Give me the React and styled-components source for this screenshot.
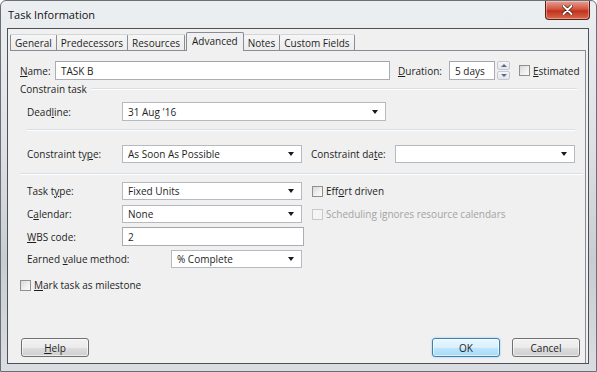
import React from 'react'
import styled, { createGlobalStyle } from 'styled-components'

const GlobalStyle = createGlobalStyle`
  html, body {
    margin: 0;
    padding: 0;
    background: #ffffff;
  }
  body {
    font-family: "Open Sans", "Noto Sans", sans-serif;
    font-size: 10px;
    color: #1e1e1e;
  }
`

const Window = styled.div`
  width: 597px;
  height: 372px;
  box-sizing: border-box;
  display: flex;
  flex-direction: column;
  border: 1px solid #6b6f74;
  border-radius: 6px 6px 0 0;
  background: linear-gradient(180deg, #eceff2 0%, #dde1e5 40%, #c8cdd3 70%, #dadee2 100%);
  overflow: hidden;
`

const TitleBar = styled.div`
  height: 27px;
  display: flex;
  align-items: center;
  justify-content: space-between;
  padding-left: 7px;
  padding-right: 6px;
`

const Title = styled.span`
  font-size: 11px;
  color: #111;
  margin-top: -1px;
`

const CloseButton = styled.div`
  width: 43px;
  height: 18px;
  margin-top: -8px;
  border: 1px solid #5a1e17;
  border-top: none;
  border-radius: 0 0 4px 4px;
  background: linear-gradient(180deg, #e6a196 0%, #d4553f 45%, #c0321b 55%, #d8684c 100%);
  display: flex;
  align-items: center;
  justify-content: center;
  box-shadow: inset 0 0 0 1px rgba(255, 255, 255, 0.35);
`

const Client = styled.div`
  flex: 1;
  margin: 0 7px 7px 6px;
  border: 1px solid #4d5156;
  background: #f0f0f0;
  display: flex;
  flex-direction: column;
`

const TabStrip = styled.div`
  display: flex;
  align-items: flex-end;
  height: 21px;
  padding-left: 2px;
  margin-top: 1px;
`

const Tab = styled.div`
  height: ${p => (p.active ? '19px' : '17px')};
  padding: 0 ${p => (p.active ? 5 : 4)}px ${p => (p.active ? '3px' : '0')};
  margin: ${p => (p.active ? '0 0 0 1px' : '0')};
  box-sizing: border-box;
  display: flex;
  align-items: center;
  border-top: 1px solid ${p => (p.active ? '#898c95' : '#d2d4d8')};
  border-right: 1px solid #898c95;
  border-left: ${p => (p.first || p.active ? '1px solid #898c95' : 'none')};
  border-bottom: ${p => (p.active ? 'none' : '1px solid #898c95')};
  background: ${p => (p.active ? '#f0f0f0' : 'linear-gradient(180deg, #f6f6f6 0%, #ececec 100%)')};
  border-radius: 2px 2px 0 0;
  position: relative;
  z-index: ${p => (p.active ? 2 : 1)};
`

const Panel = styled.div`
  flex: 1;
  margin: -1px 2px 0 2px;
  border-top: 1px solid #898c95;
  border-right: 1px solid #898c95;
  display: flex;
  flex-direction: column;
`

const Row = styled.div`
  display: flex;
  align-items: center;
  height: ${p => p.h || 19}px;
  margin-top: ${p => p.mt || 0}px;
  padding-left: ${p => p.pl || 0}px;
`

const Label = styled.span`
  width: ${p => p.w}px;
  margin-left: ${p => p.ml || 0}px;
  flex: none;
  white-space: nowrap;
`

const Key = styled.u`
  text-decoration-thickness: 1px;
  text-underline-offset: 1px;
`

const TextBox = styled.div`
  width: ${p => p.w}px;
  height: ${p => p.h || 19}px;
  box-sizing: border-box;
  border: 1px solid #abadb3;
  border-top-color: #a2a5ab;
  background: #fff;
  display: flex;
  align-items: center;
  padding-left: 5px;
  flex: none;
`

const Combo = styled(TextBox)`
  justify-content: space-between;
  padding-right: 7px;
  border-color: #b6b9bf;
`

const Arrow = styled.span`
  width: 0;
  height: 0;
  border-left: 3.5px solid transparent;
  border-right: 3.5px solid transparent;
  border-top: 4px solid #1a1a1a;
`

const Spinner = styled.div`
  width: 13px;
  height: 19px;
  margin-left: 2px;
  display: flex;
  flex-direction: column;
  gap: 1px;
  flex: none;
`

const SpinButton = styled.div`
  flex: 1;
  border: 1px solid #c5c8ce;
  border-radius: 2px;
  background: linear-gradient(180deg, #f4f6f8 0%, #e2e5ea 100%);
  display: flex;
  align-items: center;
  justify-content: center;
`

const SpinArrow = styled.span`
  width: 0;
  height: 0;
  border-left: 3px solid transparent;
  border-right: 3px solid transparent;
  ${p => (p.up ? 'border-bottom: 3px solid #5d6b86;' : 'border-top: 3px solid #5d6b86;')}
`

const Check = styled.span`
  width: 11px;
  height: 11px;
  box-sizing: border-box;
  border: 1px solid ${p => (p.disabled ? '#c9c9c9' : '#8e8f8f')};
  background: ${p => (p.disabled ? '#f4f4f4' : 'linear-gradient(135deg, #d8d8d8 0%, #f1f1f1 60%, #fafafa 100%)')};
  margin-right: 3px;
  flex: none;
`

const CheckLabel = styled.label`
  display: flex;
  align-items: center;
  margin-left: ${p => p.ml || 0}px;
  color: ${p => (p.disabled ? '#a3a3a3' : '#1e1e1e')};
  white-space: nowrap;
`

const GroupHeader = styled.div`
  display: flex;
  align-items: center;
  height: 14px;
  margin-top: ${p => p.mt}px;
  padding-left: 10px;
  padding-right: 8px;
`

const Line = styled.div`
  flex: 1;
  height: 0;
  border-top: 1px solid #d5dfe5;
  border-bottom: 1px solid #fff;
  margin-left: ${p => p.ml || 0}px;
`

const Separator = styled.div`
  height: 0;
  border-top: 1px solid #d5dfe5;
  border-bottom: 1px solid #fff;
  margin: ${p => p.mt}px ${p => p.mr}px 0 ${p => p.ml}px;
`

const Footer = styled.div`
  margin-top: auto;
  display: flex;
  align-items: center;
  padding: 0 5px 6px 11px;
`

const Button = styled.div`
  width: 68px;
  height: 19px;
  box-sizing: border-box;
  border: 1px solid ${p => (p.primary ? '#3c7fb1' : '#707070')};
  border-radius: 3px;
  display: flex;
  align-items: center;
  justify-content: center;
  margin-left: ${p => p.ml || 0}px;
  background: ${p =>
    p.primary
      ? 'linear-gradient(180deg, #eaf6fd 0%, #d9f0fc 50%, #bee6fd 51%, #a7d9f5 100%)'
      : 'linear-gradient(180deg, #f2f2f2 0%, #ebebeb 50%, #dddddd 51%, #cfcfcf 100%)'};
  box-shadow: ${p => (p.primary ? '0 0 2px #7ec4ea, inset 0 0 0 1px rgba(255,255,255,0.6)' : 'inset 0 0 0 1px rgba(255,255,255,0.6)')};
`

const Spacer = styled.div`
  flex: 1;
`

export default function App() {
  return (
    <>
      <GlobalStyle />
      <Window>
        <TitleBar>
          <Title>Task Information</Title>
          <CloseButton>
            <svg width="11" height="10" viewBox="0 0 11 10">
              <path d="M1.5 1 L9.5 9 M9.5 1 L1.5 9" stroke="#3a0d08" strokeWidth="3.2" strokeLinecap="round" />
              <path d="M1.5 1 L9.5 9 M9.5 1 L1.5 9" stroke="#ffffff" strokeWidth="2" strokeLinecap="round" />
            </svg>
          </CloseButton>
        </TitleBar>
        <Client>
          <TabStrip>
            <Tab first>General</Tab>
            <Tab>Predecessors</Tab>
            <Tab>Resources</Tab>
            <Tab active>Advanced</Tab>
            <Tab>Notes</Tab>
            <Tab>Custom Fields</Tab>
          </TabStrip>
          <Panel>
            <Row mt={10} pl={10}>
              <Label w={35}><Key>N</Key>ame:</Label>
              <TextBox w={335}>TASK B</TextBox>
              <Label w={51} ml={8}><Key>D</Key>uration:</Label>
              <TextBox w={46}>5 days</TextBox>
              <Spinner>
                <SpinButton><SpinArrow up /></SpinButton>
                <SpinButton><SpinArrow /></SpinButton>
              </Spinner>
              <CheckLabel ml={9}><Check /><Key>E</Key>stimated</CheckLabel>
            </Row>
            <GroupHeader mt={2}>
              <span>Constrain task</span>
              <Line ml={4} />
            </GroupHeader>
            <Row mt={6} pl={17}>
              <Label w={95}>Dead<Key>l</Key>ine:</Label>
              <Combo w={264}>31 Aug '16<Arrow /></Combo>
            </Row>
            <Separator mt={8} ml={17} mr={10} />
            <Row mt={14} h={18} pl={17}>
              <Label w={95}>Constraint ty<Key>p</Key>e:</Label>
              <Combo w={180} h={18}>As Soon As Possible<Arrow /></Combo>
              <Label w={84} ml={9}>Constraint da<Key>t</Key>e:</Label>
              <Combo w={180} h={18}><span /><Arrow /></Combo>
            </Row>
            <Separator mt={10} ml={10} mr={2} />
            <Row mt={7} h={18} pl={17}>
              <Label w={95}>Task t<Key>y</Key>pe:</Label>
              <Combo w={180} h={18}>Fixed Units<Arrow /></Combo>
              <CheckLabel ml={10}><Check />Eff<Key>o</Key>rt driven</CheckLabel>
            </Row>
            <Row mt={5} h={18} pl={17}>
              <Label w={95}>C<Key>a</Key>lendar:</Label>
              <Combo w={180} h={18}>None<Arrow /></Combo>
              <CheckLabel ml={10} disabled><Check disabled />Scheduling ignores resource calendars</CheckLabel>
            </Row>
            <Row mt={4} h={19} pl={17}>
              <Label w={95}><Key>W</Key>BS code:</Label>
              <TextBox w={182}>2</TextBox>
            </Row>
            <Row mt={4} h={18} pl={17}>
              <Label w={144}>Earned <Key>v</Key>alue method:</Label>
              <Combo w={131} h={18}>% Complete<Arrow /></Combo>
            </Row>
            <Row mt={10} h={14} pl={10}>
              <CheckLabel><Check /><Key>M</Key>ark task as milestone</CheckLabel>
            </Row>
            <Footer>
              <Button><Key>H</Key>elp</Button>
              <Spacer />
              <Button primary>OK</Button>
              <Button ml={12}>Cancel</Button>
            </Footer>
          </Panel>
        </Client>
      </Window>
    </>
  )
}
